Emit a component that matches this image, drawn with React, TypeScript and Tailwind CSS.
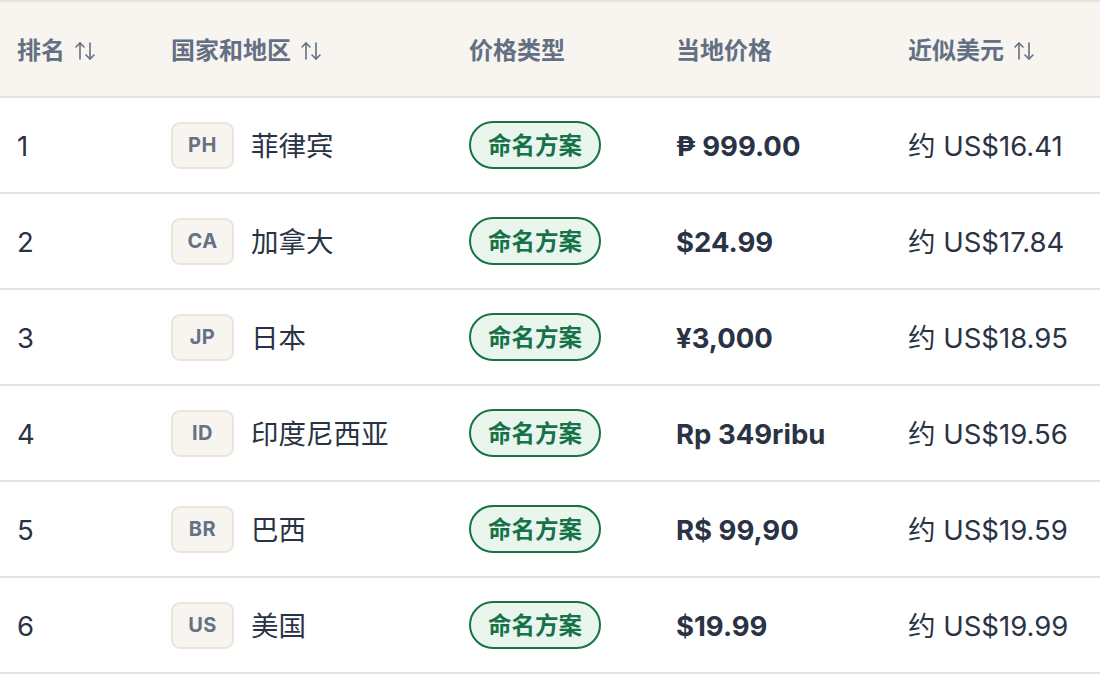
import React from 'react';

type Row = {
  rank: number;
  code: string;
  name: string;
  local: string;
  usd: string;
};

const rows: Row[] = [
  { rank: 1, code: 'PH', name: '菲律宾', local: '₱ 999.00', usd: '约 US$16.41' },
  { rank: 2, code: 'CA', name: '加拿大', local: '$24.99', usd: '约 US$17.84' },
  { rank: 3, code: 'JP', name: '日本', local: '¥3,000', usd: '约 US$18.95' },
  { rank: 4, code: 'ID', name: '印度尼西亚', local: 'Rp 349ribu', usd: '约 US$19.56' },
  { rank: 5, code: 'BR', name: '巴西', local: 'R$ 99,90', usd: '约 US$19.59' },
  { rank: 6, code: 'US', name: '美国', local: '$19.99', usd: '约 US$19.99' },
];

const cols = 'grid grid-cols-[154px_298px_207px_232px_1fr]';

const SortIcon = () => (
  <svg width="24" height="22" viewBox="0 0 24 22" fill="none" stroke="currentColor" strokeWidth="1.6" strokeLinecap="round" strokeLinejoin="round" className="ml-2 shrink-0">
    <path d="M7 19V3" />
    <path d="M3 7l4-4 4 4" />
    <path d="M17 3v16" />
    <path d="M13 15l4 4 4-4" />
  </svg>
);

const HeadCell = ({ label, sortable }: { label: string; sortable?: boolean }) => (
  <div className="flex items-center pl-[17px] pt-[3px]">
    <span>{label}</span>
    {sortable && <SortIcon />}
  </div>
);

export default function App() {
  return (
    <div
      className="w-[1100px] h-[674px] overflow-hidden bg-white border-t-2 border-[#e9e4da]"
      style={{ fontFamily: 'Inter, "Noto Sans CJK SC", sans-serif' }}
    >
      {/* 表头 */}
      <div className={`${cols} h-[96px] bg-[#f8f5f0] border-b-2 border-[#e9e4da] text-[24px] font-bold text-[#637083]`}>
        <HeadCell label="排名" sortable />
        <HeadCell label="国家和地区" sortable />
        <HeadCell label="价格类型" />
        <HeadCell label="当地价格" />
        <HeadCell label="近似美元" sortable />
      </div>

      {rows.map((r) => (
        <div key={r.code} className={`${cols} h-[96px] border-b-2 border-[#e9e4da] text-[27.5px] text-[#2a3344]`}>
          <div className="flex items-center pl-[17px] pt-[3px]">{r.rank}</div>
          <div className="flex items-center pl-[17px] gap-[17px]">
            <span className="w-[63px] h-[47px] flex items-center justify-center rounded-[9px] border-2 border-[#ebe5db] bg-[#f8f5f0] text-[20px] font-bold tracking-wide text-[#657185]">
              {r.code}
            </span>
            <span className="pt-[3px]">{r.name}</span>
          </div>
          <div className="flex items-center pl-[17px]">
            <span className="h-[48px] w-[132px] flex items-center justify-center rounded-full border-2 border-[#167349] bg-[#eaf5ee] text-[23.5px] font-bold text-[#167349] pt-[2px]">
              命名方案
            </span>
          </div>
          <div className="flex items-center pl-[17px] pt-[3px] font-bold">{r.local}</div>
          <div className="flex items-center pl-[17px] pt-[3px]">{r.usd}</div>
        </div>
      ))}
    </div>
  );
}
